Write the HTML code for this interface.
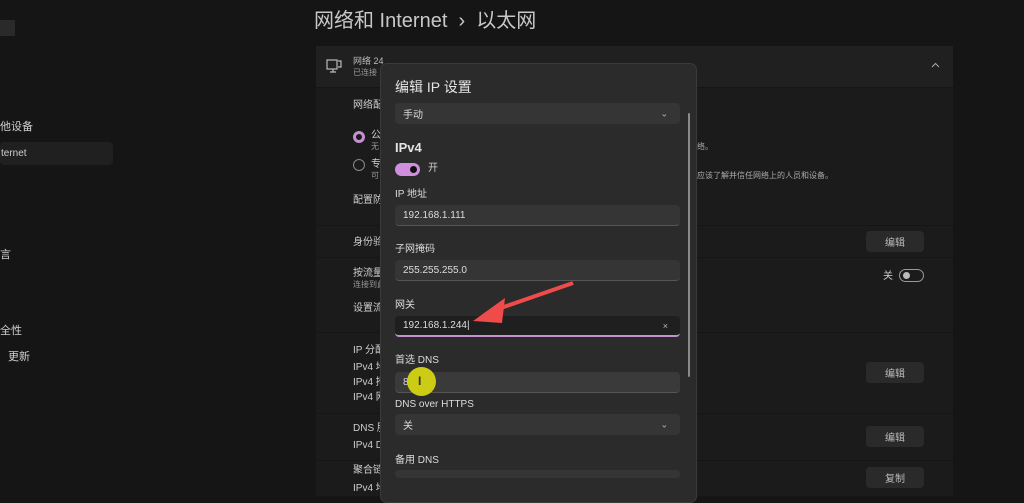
<!DOCTYPE html>
<html><head><meta charset="utf-8"><style>
*{margin:0;padding:0;box-sizing:border-box}
body{width:1024px;height:496px;overflow:hidden;background:#151515;font-family:"Liberation Sans","Noto Sans CJK SC",sans-serif;color:#cfcfcf;position:relative;font-size:10px}
.a{position:absolute;white-space:nowrap;line-height:1.2}
.main{position:absolute;left:316px;top:46px;width:637px;height:450px;background:#1b1b1b}
.hdr{position:absolute;left:316px;top:46px;width:637px;height:42px;background:#202020;border-bottom:1px solid #151515}
.btn{position:absolute;left:866px;width:58px;height:21px;background:#2a2a2a;border-radius:4px;color:#bbb;font-size:10px;display:flex;align-items:center;justify-content:center}
.dlg{position:absolute;left:380px;top:63px;width:317px;height:440px;background:#2b2b2b;border:1px solid #3a3a3a;border-radius:7px}
.inp{position:absolute;left:395px;width:285px;height:21px;background:#353535;border-radius:4px;border-bottom:1px solid #555;font-size:10px;display:flex;align-items:center;padding-left:8px;color:#ddd}
.lbl{position:absolute;left:395px;font-size:10px;color:#ddd;line-height:1.2}
.chev{position:absolute;right:12px;top:50%;transform:translateY(-50%);font-size:9px;color:#bbb}
.sep{position:absolute;left:316px;width:637px;height:1px;background:#151515}
</style></head><body>
<div class="a" style="left:0;top:20px;width:15px;height:16px;background:#2a2a2a"></div>
<div class="a" style="left:0;top:121px;font-size:11px">他设备</div>
<div class="a" style="left:0;top:142px;width:113px;height:23px;background:#202020;border-radius:4px"></div>
<div class="a" style="left:1px;top:148px;font-size:10px">ternet</div>
<div class="a" style="left:0;top:249px;font-size:11px">言</div>
<div class="a" style="left:0;top:325px;font-size:11px">全性</div>
<div class="a" style="left:8px;top:351px;font-size:11px">更新</div>
<div class="a" style="left:314px;top:9px;font-size:20px;color:#c8c8c8">网络和 Internet &nbsp;›&nbsp; 以太网</div>
<div class="main"></div>
<div class="hdr"></div>
<svg class="a" style="left:326px;top:58px" width="16" height="16" viewBox="0 0 16 16" fill="none" stroke="#bbb" stroke-width="1.2"><rect x="1" y="2" width="10" height="9"/><path d="M4 14h6M7 11v3M12 3h3v6h-3"/></svg>
<div class="a" style="left:353px;top:56px;font-size:9px;color:#bbb">网络 24</div>
<div class="a" style="left:353px;top:68px;font-size:8px;color:#999">已连接</div>
<svg class="a" style="left:931px;top:62px" width="9" height="6" viewBox="0 0 9 6"><path d="M1 5L4.5 1.5L8 5" fill="none" stroke="#aaa" stroke-width="1"/></svg>
<div class="a" style="left:353px;top:100px;font-size:10px">网络配</div>
<div class="a" style="left:353px;top:131px;width:12px;height:12px;border:3px solid #c58fd0;border-radius:50%"></div>
<div class="a" style="left:371px;top:130px;font-size:10px">公</div><div class="a" style="left:371px;top:142px;font-size:8px;color:#999">无</div>
<div class="a" style="left:353px;top:159px;width:12px;height:12px;border:1px solid #888;border-radius:50%"></div>
<div class="a" style="left:371px;top:159px;font-size:10px">专</div><div class="a" style="left:371px;top:171px;font-size:8px;color:#999">可</div>
<div class="a" style="left:697px;top:142px;font-size:8px;color:#aaa">络。</div>
<div class="a" style="left:697px;top:171px;font-size:8px;color:#aaa">应该了解并信任网络上的人员和设备。</div>
<div class="a" style="left:353px;top:195px;font-size:10px">配置防</div>
<div class="sep" style="top:225px"></div>
<div class="a" style="left:353px;top:237px;font-size:10px">身份验</div>
<div class="btn" style="top:231px">编辑</div>
<div class="sep" style="top:257px"></div>
<div class="a" style="left:353px;top:268px;font-size:10px">按流量</div><div class="a" style="left:353px;top:280px;font-size:8px;color:#999">连接到此</div>
<div class="a" style="left:883px;top:271px;font-size:10px">关</div>
<div class="a" style="left:899px;top:269px;width:25px;height:13px;border:1px solid #999;border-radius:7px"><div style="position:absolute;left:3px;top:2px;width:7px;height:7px;border-radius:50%;background:#bbb"></div></div>
<div class="a" style="left:353px;top:303px;font-size:10px">设置流</div>
<div class="sep" style="top:332px"></div>
<div class="a" style="left:353px;top:345px;font-size:10px">IP 分配</div>
<div class="a" style="left:353px;top:362px;font-size:10px">IPv4 地</div>
<div class="a" style="left:353px;top:377px;font-size:10px">IPv4 掩</div>
<div class="a" style="left:353px;top:392px;font-size:10px">IPv4 网</div>
<div class="btn" style="top:362px">编辑</div>
<div class="sep" style="top:413px"></div>
<div class="a" style="left:353px;top:423px;font-size:10px">DNS 服</div>
<div class="a" style="left:353px;top:440px;font-size:10px">IPv4 DN</div>
<div class="btn" style="top:426px">编辑</div>
<div class="sep" style="top:460px"></div>
<div class="a" style="left:353px;top:465px;font-size:10px">聚合链</div>
<div class="a" style="left:353px;top:483px;font-size:10px">IPv4 地</div>
<div class="btn" style="top:467px">复制</div>
<div class="dlg"></div>
<div class="a" style="left:688px;top:113px;width:2px;height:264px;background:#8a8a8a;border-radius:1px"></div>
<div class="a" style="left:395px;top:79px;font-size:14px;color:#e4e4e4">编辑 IP 设置</div>
<div class="inp" style="top:103px;border-bottom:none">手动<span class="chev">⌄</span></div>
<div class="a" style="left:395px;top:140px;font-size:13px;font-weight:bold;color:#e4e4e4">IPv4</div>
<div class="a" style="left:395px;top:163px;width:25px;height:13px;background:#d08fdc;border-radius:7px"><div style="position:absolute;right:3px;top:3px;width:7px;height:7px;border-radius:50%;background:#111"></div></div>
<div class="a" style="left:428px;top:163px;font-size:10px">开</div>
<div class="lbl" style="top:189px">IP 地址</div>
<div class="inp" style="top:205px">192.168.1.111</div>
<div class="lbl" style="top:244px">子网掩码</div>
<div class="inp" style="top:260px">255.255.255.0</div>
<div class="lbl" style="top:300px">网关</div>
<div class="inp" style="top:316px;background:#1f1f1f;border-bottom:2px solid #c58fd0">192.168.1.244|<span class="chev">×</span></div>
<div class="lbl" style="top:355px">首选 DNS</div>
<div class="inp" style="top:372px;background:#3a3a3a">8</div>
<div class="lbl" style="top:399px">DNS over HTTPS</div>
<div class="inp" style="top:414px;border-bottom:none">关<span class="chev">⌄</span></div>
<div class="lbl" style="top:455px">备用 DNS</div>
<div class="inp" style="top:470px;height:8px;border-bottom:none"></div>
<div class="a" style="left:407px;top:367px;width:29px;height:29px;border-radius:50%;background:#cccc14"></div>
<div class="a" style="left:418px;top:374px;font-size:12px;color:#333;font-weight:bold">I</div>
<svg class="a" style="left:470px;top:280px" width="110" height="50" viewBox="0 0 110 50"><path d="M103 3 L25 30" stroke="#ef4b4b" stroke-width="4"/><path d="M3 41 L35 18 L32 43 Z" fill="#ef4b4b"/></svg>
</body></html>
